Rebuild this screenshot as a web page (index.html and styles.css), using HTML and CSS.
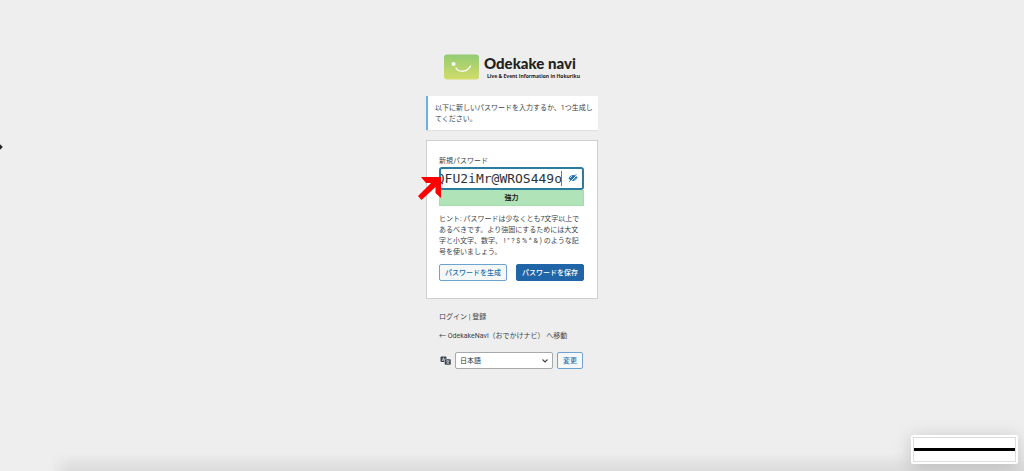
FILE: index.html
```html
<!DOCTYPE html>
<html lang="ja">
<head>
  <meta charset="UTF-8" />
  <meta name="viewport" content="width=device-width, initial-scale=1.0" />
  <title>パスワードのリセット - OdekakeNavi</title>
  <link rel="stylesheet" href="styles.css">
</head>
<body>
  <div class="login">
    <h1 class="logo">
      <svg class="logo-mark" viewBox="0 0 35 25" aria-hidden="true">
        <defs>
          <linearGradient id="leaf" x1="0" y1="0" x2="0" y2="1">
            <stop offset="0" stop-color="#93cb73" />
            <stop offset="1" stop-color="#d3dc69" />
          </linearGradient>
        </defs>
        <rect width="35" height="25" rx="3" fill="url(#leaf)" />
        <circle cx="9.5" cy="9.5" r="2" fill="#fff" />
        <path d="M12 13.5C15 18.500 23.500 17.500 26.500 11.500" fill="none" stroke="#fff" stroke-width="1.3" stroke-linecap="round" />
      </svg>
      <span class="logo-text">
        <span class="logo-name">Odekake navi</span>
        <span class="logo-tag">Live &amp; Event Information in Hokuriku</span>
      </span>
    </h1>

    <p class="message">以下に新しいパスワードを入力するか、1つ生成してください。</p>

    <form class="card">
      <label for="pass">新規パスワード</label>
      <div class="pass-wrap">
        <input type="text" id="pass" value="QFU2iMr@WROS449o" autocomplete="off" spellcheck="false" />
        <span class="caret"></span>
        <button type="button" class="eye" aria-label="パスワードを隠す">
          <svg viewBox="0 0 20 16">
            <path d="M1 8.500C4 3.500 7 2 10.500 2S17 4 19 7.500C16 12.500 13 14 10 14S4 12.500 1 8.500Z" fill="#2271b1" />
            <path d="M4 8C5.500 6 6.500 5.200 8 4.500M12.500 12C14 11.500 15.500 10 16.500 8.500" fill="none" stroke="#fff" stroke-width="1.4" />
            <path d="M4.500 16L18.500 1" stroke="#fff" stroke-width="1.8" />
            <path d="M2.500 15.500L16.500 0.500" stroke="#2271b1" stroke-width="1.800" />
          </svg>
        </button>
        <svg class="arrow" viewBox="0 0 24 25" aria-hidden="true">
          <path d="M3 1H23V22L17.500 17V11L3.500 24L0 20L13 7H8Z" fill="#f00" />
        </svg>
      </div>
      <div class="strength">強力</div>
      <p class="hint">ヒント: パスワードは少なくとも7文字以上であるべきです。より強固にするためには大文字と小文字、数字、 ! " ? $ % ^ &amp; ) のような記号を使いましょう。</p>
      <div class="actions">
        <button type="button" class="btn">パスワードを生成</button>
        <button type="submit" class="btn primary">パスワードを保存</button>
      </div>
    </form>

    <p class="nav"><a href="#">ログイン</a> | <a href="#">登録</a></p>
    <p class="nav back"><a href="#">← OdekakeNavi（おでかけナビ） へ移動</a></p>

    <form class="language">
      <label for="lang" aria-label="言語">
        <svg viewBox="0 0 22 18">
          <rect x="1" y="1" width="12" height="11" rx="2" fill="#3c434a" />
          <path d="M4.500 10L7 3.500L9.500 10M5.500 8H8.500" fill="none" stroke="#eee" stroke-width="1.400" />
          <rect x="9" y="6" width="13" height="12" rx="2" fill="#3c434a" stroke="#eee" />
          <path d="M12 10H19M15.500 8V10M18 10C17 13 15 15 12.500 16M13.500 11C14.500 13.500 16.500 15 18.500 16" fill="none" stroke="#eee" stroke-width="1.200" />
        </svg>
      </label>
      <select id="lang">
        <option>日本語</option>
      </select>
      <button type="button" class="btn">変更</button>
    </form>
  </div>

  <span class="edge-mark"></span>
  <div class="dock-shade"></div>
  <div class="thumb"><div class="thumb-page"></div></div>
</body>
</html>
```

FILE: styles.css
```css
* {
  box-sizing: border-box;
}
body {
  margin: 0;
  min-height: 100vh;
  position: relative;
  overflow: hidden;
  background: #eee;
  color: #3c434a;
  font-family: Roboto, "Noto Sans CJK JP", sans-serif;
  font-size: 7px;
  line-height: 11px;
}
p {
  margin: 0;
}
a {
  color: inherit;
  text-decoration: none;
}
button,
input,
select {
  font-family: inherit;
  font-size: 7px;
}
.login {
  width: 172px;
  margin: 0 auto;
  padding-top: 54px;
}
.logo {
  display: flex;
  justify-content: center;
  gap: 5px;
  margin: 0 0 16px;
  height: 26px;
}
.logo-mark {
  width: 35px;
  height: 26px;
}
.logo-text {
  display: flex;
  flex-direction: column;
  color: #222;
  font-family: Lato, sans-serif;
  white-space: nowrap;
}
.logo-name {
  font-size: 15px;
  line-height: 18px;
  font-weight: 900;
}
.logo-tag {
  padding-left: 3px;
  font-family: "Open Sans", sans-serif;
  font-size: 5px;
  line-height: 8px;
  font-weight: bold;
}
.message {
  margin-bottom: 10px;
  padding: 7px 5px 5px 7px;
  border-left: 2px solid #72aee6;
  background: #fff;
  box-shadow: 0 1px 1px rgba(0, 0, 0, 0.06);
}
.card {
  padding: 15px 13px 17px 12px;
  border: 1px solid #ccd0d4;
  background: #fff;
}
.card label {
  display: block;
}
.pass-wrap {
  position: relative;
}
.pass-wrap input {
  display: block;
  width: 100%;
  height: 23px;
  padding: 0 20px 0 0;
  border: 2px solid #2a7da0;
  border-radius: 3px;
  outline: none;
  background: #fff;
  color: #2c3338;
  font-family: "DejaVu Sans Mono", monospace;
  font-size: 13px;
  direction: rtl;
}
.caret {
  position: absolute;
  top: 4px;
  right: 22px;
  width: 1px;
  height: 15px;
  background: #777;
}
.eye {
  position: absolute;
  top: 6px;
  right: 6px;
  width: 10px;
  height: 10px;
  padding: 0;
  border: 0;
  background: none;
}
.eye svg {
  display: block;
  width: 10px;
  height: 10px;
}
.arrow {
  position: absolute;
  top: 9px;
  left: -21px;
  width: 24px;
  height: 25px;
}
.strength {
  height: 16px;
  border: 1px solid #a5deac;
  border-top: 0;
  background: #b0e3b8;
  color: #1d2327;
  font-weight: bold;
  line-height: 16px;
  text-align: center;
}
.hint {
  margin-top: 8px;
}
.actions {
  display: flex;
  justify-content: space-between;
  margin-top: 6px;
}
.btn {
  height: 17px;
  padding: 1px 5px 0;
  border: 1px solid #6da3d0;
  border-radius: 2px;
  background: #f6f7f7;
  color: #2271b1;
  font-weight: 500;
  line-height: 14px;
  white-space: nowrap;
}
.btn.primary {
  border-color: #2065a8;
  background: #2065a8;
  color: #fff;
}
.nav {
  margin-top: 13px;
  padding-left: 13px;
}
.nav.back {
  margin-top: 8px;
}
.language {
  display: flex;
  align-items: center;
  gap: 4px;
  margin: 10px 15px 0 14px;
}
.language svg {
  display: block;
  width: 11px;
  height: 9px;
}
.language select {
  flex: 1;
  height: 17px;
  padding: 0 4px;
  border: 1px solid #a7aaad;
  border-radius: 2px;
  appearance: none;
  background: #fff url("data:image/svg+xml,%3Csvg xmlns='http://www.w3.org/2000/svg' viewBox='0 0 8 8'%3E%3Cpath d='M1.500 2.500L4 5L6.500 2.500' fill='none' stroke='%23444' stroke-width='1.100'/%3E%3C/svg%3E") no-repeat right 3px center / 8px 8px;
  color: #2c3338;
}
.edge-mark {
  position: absolute;
  top: 145px;
  left: -2px;
  width: 4px;
  height: 4px;
  background: #222;
  transform: rotate(45deg);
}
.dock-shade {
  position: absolute;
  right: 0;
  bottom: 0;
  left: 50px;
  height: 18px;
  background: linear-gradient(rgba(0, 0, 0, 0), rgba(0, 0, 0, 0.08));
  mask-image: linear-gradient(to right, transparent, #000 20px);
}
.thumb {
  position: absolute;
  right: 6px;
  bottom: 7px;
  width: 107px;
  height: 29px;
  padding: 2px;
  border-radius: 2px;
  background: #fff;
  box-shadow: 0 3px 18px rgba(0, 0, 0, 0.18);
}
.thumb-page {
  height: 100%;
  border: 1px solid #ddd;
  background: linear-gradient(#000, #000) no-repeat center / 100% 3px;
}
```
